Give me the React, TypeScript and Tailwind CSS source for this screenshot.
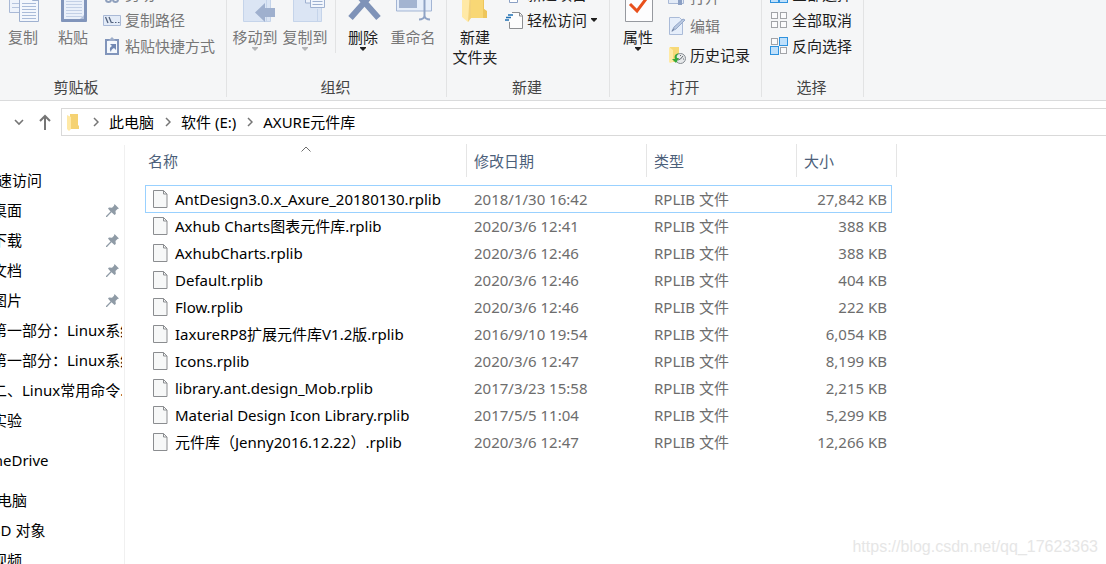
import type { ReactNode } from "react"
import { clsx } from "clsx"

interface FileRow {
  name: string
  date: string
  size: string
}

const files: FileRow[] = [
  { name: "AntDesign3.0.x_Axure_20180130.rplib", date: "2018/1/30 16:42", size: "27,842 KB" },
  { name: "Axhub Charts图表元件库.rplib", date: "2020/3/6 12:41", size: "388 KB" },
  { name: "AxhubCharts.rplib", date: "2020/3/6 12:46", size: "388 KB" },
  { name: "Default.rplib", date: "2020/3/6 12:46", size: "404 KB" },
  { name: "Flow.rplib", date: "2020/3/6 12:46", size: "222 KB" },
  { name: "IaxureRP8扩展元件库V1.2版.rplib", date: "2016/9/10 19:54", size: "6,054 KB" },
  { name: "Icons.rplib", date: "2020/3/6 12:47", size: "8,199 KB" },
  { name: "library.ant.design_Mob.rplib", date: "2017/3/23 15:58", size: "2,215 KB" },
  { name: "Material Design Icon Library.rplib", date: "2017/5/5 11:04", size: "5,299 KB" },
  { name: "元件库（Jenny2016.12.22）.rplib", date: "2020/3/6 12:47", size: "12,266 KB" },
]

const quickAccess = [
  { label: "桌面", pinned: true },
  { label: "下载", pinned: true },
  { label: "文档", pinned: true },
  { label: "图片", pinned: true },
  { label: "第一部分：Linux系统", pinned: false },
  { label: "第一部分：Linux系统", pinned: false },
  { label: "二、Linux常用命令...", pinned: false },
  { label: "实验", pinned: false },
]

/* ---------- large ribbon icons ---------- */

function CopyIcon() {
  return (
    <svg width="40" height="41" viewBox="0 0 40 41" fill="none">
      <path d="M6.5 4.5h17v27h-17z" fill="#eef3fb" stroke="#a9b9d6" />
      <path d="M9 10.5h8M9 14.5h8M9 18.5h8M9 22.5h8M9 26.5h8" stroke="#b5c4de" />
      <path d="M16.5 12.5h13l6 6v22h-19z" fill="#f3f7fd" stroke="#9fb1d0" />
      <path d="M29.5 12.5v7h6" stroke="#9fb1d0" />
      <path d="M19 22.5h14M19 25.5h14M19 28.5h14M19 31.5h14M19 34.5h14M19 37.5h14" stroke="#a9bbd9" />
    </svg>
  )
}

function PasteIcon() {
  return (
    <svg width="40" height="41" viewBox="0 0 40 41" fill="none">
      <rect x="8" y="4" width="26" height="37" rx="1" fill="#8195bb" />
      <path d="M11 8h20v30H11z" fill="#eaf0fa" />
      <path d="M13 20.5h16M13 23.5h16M13 26.5h16M13 29.5h16M13 32.5h16M13 35.5h16" stroke="#c3d0e6" />
      <path d="M27 38l4-4v4z" fill="#b4c2dc" />
    </svg>
  )
}

function MoveToIcon() {
  return (
    <svg width="40" height="41" viewBox="0 0 40 41">
      <path d="M8.5 5h27v35.5h-27z" fill="#dbe5f4" stroke="#c5d4ea" />
      <path d="M31.5 5v35M35.5 24v16" stroke="#c5d4ea" />
      <path d="M20 31.5L30 22v5h10v9H30v5z" fill="#9fb0ce" />
    </svg>
  )
}

function CopyToIcon() {
  return (
    <svg width="40" height="41" viewBox="0 0 40 41">
      <path d="M8.5 5h28v35.5h-28z" fill="#dbe5f4" stroke="#c5d4ea" />
      <path d="M32.5 28v12M8.5 21.5v19" stroke="#c5d4ea" />
      <path d="M20.5 5h14v17h-14z" fill="#eef3fb" stroke="#9fb1d0" />
      <path d="M25.5 12h14v14.5h-14z" fill="#f3f7fd" stroke="#9fb1d0" />
      <path d="M27.5 17.5h10M27.5 20.5h10M27.5 23.5h10" stroke="#9fb1d0" />
    </svg>
  )
}

function DeleteIcon() {
  return (
    <svg width="40" height="41" viewBox="0 0 40 41" fill="none">
      <path d="M7.5 37L35 6M35.5 37L8 6" stroke="#7f93b8" strokeWidth="6" />
    </svg>
  )
}

function RenameIcon() {
  return (
    <svg width="40" height="41" viewBox="0 0 40 41" fill="none">
      <path d="M3.5 13.5h35v16.5h-35z" fill="#e6eefa" stroke="#a3b5d4" />
      <path d="M6 16h18v11H6z" fill="#a3b4d1" />
      <path d="M31.5 10v25M26 38.5c3 0 5.500-1.500 5.500-4 0 2.500 2.500 4 5.500 4" stroke="#8fa3c5" strokeWidth="2" />
    </svg>
  )
}

function NewFolderIcon() {
  return (
    <svg width="40" height="41" viewBox="0 0 40 41">
      <path d="M12 2h17v26l3 3v6H12z" fill="#f8d775" />
      <path d="M28 2h1v26l3 2v7h-4z" fill="#eec65c" />
      <path d="M7 4l9 6v27l-3 4-6-5z" fill="#ffe9a6" />
      <path d="M15 10l1 1v26l-3 4z" fill="#f3d27a" />
    </svg>
  )
}

function PropertiesIcon() {
  return (
    <svg width="40" height="41" viewBox="0 0 40 41" fill="none">
      <path d="M7.5 8.5h27v32h-27z" fill="#fdfdfe" stroke="#96999f" />
      <path d="M12 23l7 7L31 14" stroke="#e8501c" strokeWidth="3" />
    </svg>
  )
}

/* ---------- small ribbon icons ---------- */

function SmallIcon({ children }: { children: ReactNode }) {
  return (
    <svg width="18" height="18" viewBox="0 0 18 18" fill="none" className="shrink-0">
      {children}
    </svg>
  )
}

const cutIcon = (
  <SmallIcon>
    <path d="M5 1l6 11M12 1L7 12" stroke="#8fa0bd" strokeWidth="2" />
    <circle cx="5.5" cy="14.5" r="2.5" stroke="#8fa0bd" strokeWidth="2" />
    <circle cx="12.5" cy="14.5" r="2.5" stroke="#8fa0bd" strokeWidth="2" />
  </SmallIcon>
)

const copyPathIcon = (
  <SmallIcon>
    <path d="M.5 4.5h17v10H.5z" fill="#e3ebf7" stroke="#a9b9d6" />
    <path d="M2.5 6l2.5 6M6 6l2.5 6" stroke="#51617c" strokeWidth="1.3" />
    <path d="M9 11.5h1.5M12 11.5h1.5M15 11.5h1.5" stroke="#51617c" />
  </SmallIcon>
)

const pasteShortcutIcon = (
  <SmallIcon>
    <path d="M3 3h12v14H3z" fill="#f4f8fd" stroke="#8195bb" strokeWidth="2" />
    <path d="M5 4l4-4 4 4z" fill="#9dadc9" />
    <path d="M7 7h6v6l-2-2c-2 1-3 2-3 4-2-3-1-5 1-6z" fill="#7188b3" />
  </SmallIcon>
)

const newItemIcon = (
  <SmallIcon>
    <path d="M4.5 1v16.5h8V1z" fill="#fff" stroke="#8aa0c4" />
    <path d="M7 10h3v4H7z" fill="#a9c6ea" />
  </SmallIcon>
)

const easyAccessIcon = (
  <SmallIcon>
    <path d="M4.5 1.5h9.500l3 3v13H4.500z" fill="#fdfdfd" />
    <path d="M7 1.500h7.500l3 3v13H4.500V11M14.500 1.500v3.500h3" stroke="#8d8f92" />
    <path d="M3 4h5M1 6.500h5M0 9h4" stroke="#2272b4" strokeWidth="1.4" />
  </SmallIcon>
)

const openIcon = (
  <SmallIcon>
    <path d="M.5 3.5h15v12H.5z" fill="#e3ebf7" stroke="#a9b9d6" />
    <path d="M3 9h3v3H3z" fill="#7f93b8" />
    <path d="M12 6l5 6h-3v5h-4v-5H7z" fill="#8ca0c4" />
  </SmallIcon>
)

const editIcon = (
  <SmallIcon>
    <path d="M1.5.5h10l3 3v14h-13z" fill="#e6eefa" stroke="#aabbd8" />
    <path d="M4 14l2-4 9-8 2 1-9 9z" fill="#b9c8e0" stroke="#94a8ca" />
    <path d="M4 14.5l2-3" stroke="#71809b" />
  </SmallIcon>
)

const historyIcon = (
  <SmallIcon>
    <path d="M2 1h9v15H2z" fill="#f7d978" />
    <path d="M1 1l4 3v12l-3 1-1-1z" fill="#ffeaa5" />
    <circle cx="12.5" cy="12.5" r="5" fill="#e7e9eb" stroke="#858b91" />
    <path d="M10 14l2.500-1L15 10M12.500 9v1M16 13h-1" stroke="#656b70" />
    <path d="M11 7C7 8 6 10 7 13H4l4 4 3-5H9c-1-2 0-3 2-5z" fill="#35a83b" />
  </SmallIcon>
)

/* 2x2 tiles, the highlighted ones are listed by index */
function TilesIcon({ active }: { active: number[] }) {
  const spots = [[1, 1], [10, 1], [1, 10], [10, 10]]
  return (
    <SmallIcon>
      {spots.map(([x, y], i) => {
        const on = active.includes(i)
        return (
          <rect
            key={i}
            x={on ? x - 0.5 : x + 0.5}
            y={on ? y - 0.5 : y + 0.5}
            width={on ? 8 : 6}
            height={on ? 8 : 6}
            fill={on ? "#bfe0fb" : "#fbfbfc"}
            stroke={on ? "#2f92de" : "#a2a4a8"}
          />
        )
      })}
    </SmallIcon>
  )
}

function Caret({ className }: { className?: string }) {
  return (
    <svg width="6" height="4" viewBox="0 0 6 4" className={className}>
      <path d="M0 0h6v1L3 4 0 1z" fill="currentColor" />
    </svg>
  )
}

/* ---------- ribbon ---------- */

interface RibbonButtonProps {
  icon: ReactNode
  label: ReactNode
  disabled?: boolean
  caret?: boolean
}

function BigButton({ icon, label, disabled, caret }: RibbonButtonProps) {
  return (
    <button
      type="button"
      disabled={disabled}
      className={clsx("flex w-[50px] shrink-0 flex-col items-center whitespace-nowrap", disabled ? "text-[#777777]" : "text-[#1e1e1e]")}
    >
      {icon}
      <span className="mt-[5px] leading-5">{label}</span>
      {caret && <Caret className={disabled ? "text-[#b4b5b7]" : "text-[#1e1e1e]"} />}
    </button>
  )
}

function SmallButton({ icon, label, disabled, caret }: RibbonButtonProps) {
  return (
    <button
      type="button"
      disabled={disabled}
      className={clsx("flex h-[26px] items-center gap-1 whitespace-nowrap", disabled ? "text-[#777777]" : "text-[#1e1e1e]")}
    >
      {icon}
      <span className="leading-5">{label}</span>
      {caret && <Caret />}
    </button>
  )
}

function RibbonGroup({ title, className, children }: { title: string; className: string; children: ReactNode }) {
  return (
    <section aria-label={title} className={clsx("flex shrink-0 flex-col border-r border-[#e2e3e4]", className)}>
      <div className="flex h-24 items-start">{children}</div>
      <h2 className="pr-0.5 text-center leading-5 text-[#444444]">{title}</h2>
    </section>
  )
}

function Ribbon() {
  return (
    <header className="shrink-0 overflow-hidden border-b border-[#dadbdc] bg-[#f5f6f7] pb-[3px]">
      {/* the first group runs past the left edge of the window */}
      <div className="-mt-[19px] -ml-[72px] flex">
        <RibbonGroup title="剪贴板" className="w-[299px]">
          <div className="ml-[70px] flex">
            <BigButton icon={<CopyIcon />} label="复制" disabled />
            <BigButton icon={<PasteIcon />} label="粘贴" disabled />
          </div>
          <div className="ml-[5px] flex flex-col">
            <SmallButton icon={cutIcon} label="剪切" disabled />
            <SmallButton icon={copyPathIcon} label="复制路径" disabled />
            <SmallButton icon={pasteShortcutIcon} label="粘贴快捷方式" disabled />
          </div>
        </RibbonGroup>

        <RibbonGroup title="组织" className="w-[220px] px-[3px]">
          <BigButton icon={<MoveToIcon />} label="移动到" disabled caret />
          <BigButton icon={<CopyToIcon />} label="复制到" disabled caret />
          <div className="mr-0.5 ml-[5px] h-[72px] w-px bg-[#e2e3e4]" />
          <BigButton icon={<DeleteIcon />} label="删除" caret />
          <BigButton icon={<RenameIcon />} label="重命名" disabled />
        </RibbonGroup>

        <RibbonGroup title="新建" className="w-[163px] px-[3px]">
          <BigButton icon={<NewFolderIcon />} label={<>新建<br />文件夹</>} />
          <div className="ml-[5px] flex flex-col">
            <SmallButton icon={newItemIcon} label="新建项目" caret />
            <SmallButton icon={easyAccessIcon} label="轻松访问" caret />
          </div>
        </RibbonGroup>

        <RibbonGroup title="打开" className="w-[152px] px-[3px]">
          <BigButton icon={<PropertiesIcon />} label="属性" caret />
          <div className="ml-[5px] flex flex-col gap-[3px] pt-[3px]">
            <SmallButton icon={openIcon} label="打开" disabled />
            <SmallButton icon={editIcon} label="编辑" disabled />
            <SmallButton icon={historyIcon} label="历史记录" />
          </div>
        </RibbonGroup>

        <RibbonGroup title="选择" className="w-[102px] px-[3px]">
          <div className="ml-[5px] flex flex-col">
            <SmallButton icon={<TilesIcon active={[0, 1, 2, 3]} />} label="全部选择" />
            <SmallButton icon={<TilesIcon active={[]} />} label="全部取消" />
            <SmallButton icon={<TilesIcon active={[1, 2]} />} label="反向选择" />
          </div>
        </RibbonGroup>
      </div>
    </header>
  )
}

/* ---------- address bar ---------- */

function Crumb({ label }: { label: string }) {
  return (
    <li className="flex items-center">
      <svg width="6" height="10" viewBox="0 0 6 10" fill="none" className="mr-2.5">
        <path d="M1 1l4 4-4 4" stroke="#757575" strokeWidth="1.5" />
      </svg>
      <a href="#" className="leading-5 whitespace-nowrap">{label}</a>
    </li>
  )
}

function AddressBar() {
  return (
    <div className="flex shrink-0 items-center py-[7px]">
      <button type="button" aria-label="最近浏览的位置" className="ml-3.5 flex w-2.5 justify-center">
        <svg width="10" height="7" viewBox="0 0 10 7" fill="none">
          <path d="M1 1l4 4 4-4" stroke="#757575" strokeWidth="1.6" />
        </svg>
      </button>
      <button type="button" aria-label="上移" className="ml-[15px] flex w-3">
        <svg width="12" height="16" viewBox="0 0 12 16" fill="none">
          <path d="M6 16V2M1 7l5-5 5 5" stroke="#757575" strokeWidth="2" />
        </svg>
      </button>
      <nav aria-label="地址" className="ml-2.5 flex h-7 flex-1 items-center border border-r-0 border-[#d9d9d9] pl-[5px]">
        <svg width="13" height="17" viewBox="0 0 13 17">
          <path d="M3 0h8v11l1 1v3H3z" fill="#f5d272" />
          <path d="M0 1l4 2v12l-2 2-2-2z" fill="#ffe9a6" />
        </svg>
        <ol className="ml-[13px] flex gap-[11px] pb-px">
          <Crumb label="此电脑" />
          <Crumb label="软件 (E:)" />
          <Crumb label="AXURE元件库" />
        </ol>
      </nav>
    </div>
  )
}

/* ---------- navigation pane ---------- */

function PinIcon() {
  return (
    <svg width="13" height="13" viewBox="0 0 13 13" className="shrink-0">
      <path d="M8.500 0L13 4.500l-1.500.5-2 2 .3 3L8.500 11 5.500 8.300 1 13H0v-1l4.500-4.500L2 4.500l1-1 3 .2 2-2z" fill="#8f9ba6" />
    </svg>
  )
}

function NavItem({ label, pinned, root }: { label: string; pinned?: boolean; root?: boolean }) {
  return (
    <li className={clsx("flex h-[30px] items-center justify-between pr-[3px]", !root && "pl-2.5")}>
      <a href="#" className="leading-5 whitespace-nowrap">{label}</a>
      {pinned && <PinIcon />}
    </li>
  )
}

function NavPane() {
  return (
    <nav aria-label="导航窗格" className="mt-0.5 w-[125px] shrink-0 overflow-hidden border-r border-[#f0f0f0] pr-0.5">
      {/* the pane is scrolled sideways by 18px */}
      <div className="-ml-[18px] overflow-hidden pt-5">
        <ul>
          <NavItem label="快速访问" root />
          {quickAccess.map((item, i) => (
            <NavItem key={i} label={item.label} pinned={item.pinned} />
          ))}
        </ul>
        <ul className="mt-2.5">
          <NavItem label="OneDrive" root />
        </ul>
        <ul className="mt-2.5">
          <NavItem label="此电脑" root />
          <NavItem label="3D 对象" />
          <NavItem label="视频" />
        </ul>
      </div>
    </nav>
  )
}

/* ---------- file list ---------- */

function FileIcon() {
  return (
    <svg width="15" height="18" viewBox="0 0 15 18" fill="none" className="shrink-0">
      <path d="M.5.5h10l3.500 3.500v13.500H.5z" fill="#f7f8f8" stroke="#8b8d90" />
      <path d="M10.500.5V4H14" stroke="#8b8d90" />
    </svg>
  )
}

function HeaderCell({ label, sorted, span }: { label: string; sorted?: boolean; span?: number }) {
  return (
    <th scope="col" colSpan={span} className="relative p-0 pb-2 text-left font-normal text-[#4c607a]">
      <div className={clsx("flex h-[33px] items-center border-r border-[#e5e5e5]", sorted ? "pl-[3px]" : "pl-[7px]")}>
        {label}
      </div>
      {sorted && (
        <svg width="10" height="6" viewBox="0 0 10 6" fill="none" className="absolute inset-x-0 top-0.5 mx-auto">
          <path d="M.5 5.500L5 1l4.500 4.500" stroke="#6d6d6d" />
        </svg>
      )}
    </th>
  )
}

function FileList() {
  return (
    <main className="min-w-0 flex-1 pt-px pl-5">
      <table className="w-[752px] table-fixed border-separate border-spacing-0 leading-5 whitespace-nowrap">
        <colgroup>
          <col className="w-[322px]" />
          <col className="w-[180px]" />
          <col className="w-[150px]" />
          <col className="w-[95px]" />
          <col className="w-[5px]" />
        </colgroup>
        <thead>
          <tr>
            <HeaderCell label="名称" sorted />
            <HeaderCell label="修改日期" />
            <HeaderCell label="类型" />
            <HeaderCell label="大小" span={2} />
          </tr>
        </thead>
        <tbody className="text-[#6d6d6d]">
          {files.map((file, i) => {
            // the focus frame closes on the top border of the row below
            const edge = clsx("h-[27px]", i < 2 && "border-t border-[#99d1ff]")
            const focused = i === 0
            return (
              <tr key={file.name}>
                <td className={clsx("p-0 text-black", edge, focused ? "border-l pl-[7px]" : "pl-2")}>
                  <div className="flex items-center gap-[7px]">
                    <FileIcon />
                    {file.name}
                  </div>
                </td>
                <td className={clsx("p-0 pl-[7px]", edge)}>{file.date}</td>
                <td className={clsx("p-0 pl-[7px]", edge)}>RPLIB 文件</td>
                <td className={clsx("p-0 text-right", edge, focused ? "border-r pr-1" : "pr-[5px]")}>{file.size}</td>
                <td className="p-0" />
              </tr>
            )
          })}
        </tbody>
      </table>
    </main>
  )
}

export default function App() {
  return (
    <div className="relative flex h-screen flex-col overflow-hidden bg-white font-['Noto_Sans','Noto_Sans_CJK_SC',sans-serif] text-[15px] text-black">
      <Ribbon />
      <AddressBar />
      <div className="flex min-h-0 flex-1">
        <NavPane />
        <FileList />
      </div>
      <p className="absolute right-2 bottom-[5px] font-['Liberation_Sans',sans-serif] text-base text-[#e6e6e6]">
        https://blog.csdn.net/qq_17623363
      </p>
    </div>
  )
}
